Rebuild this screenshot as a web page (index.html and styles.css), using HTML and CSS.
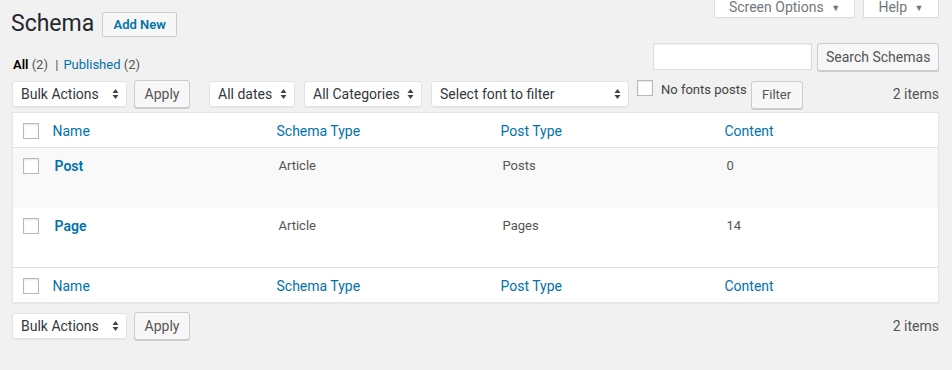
FILE: index.html
```html
<!DOCTYPE html>
<html lang="en">
<head>
    <meta charset="UTF-8">
    <meta name="viewport" content="width=device-width, initial-scale=1.0">
    <title>Schema</title>
    <link rel="stylesheet" href="styles.css">
</head>
<body>

<div class="wrap">
    <!-- Title + screen meta tabs -->
    <div class="page-head">
        <h1 class="page-title">Schema</h1>
        <a class="page-title-action" href="#">Add New</a>
        <div class="screen-meta-links">
            <button class="meta-tab meta-tab-options">Screen Options <span class="tri">&#9660;</span></button>
            <button class="meta-tab meta-tab-help">Help <span class="tri">&#9660;</span></button>
        </div>
    </div>

    <div class="views-row">
        <ul class="subsubsub">
            <li><a class="current" href="#">All <span class="count">(2)</span></a> <span class="sep">|</span></li>
            <li><a href="#">Published <span class="count">(2)</span></a></li>
        </ul>
        <div class="search-box">
            <input type="search" class="search-input">
            <button class="button">Search Schemas</button>
        </div>
    </div>

    <!-- Top filters -->
    <div class="tablenav">
        <div class="select w-bulk">Bulk Actions <svg class="arr" width="7" height="12" viewBox="0 0 7 12"><path d="M3.5 1 L6.5 5 L0.5 5 Z M3.5 11 L0.5 7 L6.5 7 Z" fill="#444"/></svg></div>
        <button class="button btn-apply">Apply</button>
        <div class="select w-dates gap-l">All dates <svg class="arr" width="7" height="12" viewBox="0 0 7 12"><path d="M3.5 1 L6.5 5 L0.5 5 Z M3.5 11 L0.5 7 L6.5 7 Z" fill="#444"/></svg></div>
        <div class="select w-cats">All Categories <svg class="arr" width="7" height="12" viewBox="0 0 7 12"><path d="M3.5 1 L6.5 5 L0.5 5 Z M3.5 11 L0.5 7 L6.5 7 Z" fill="#444"/></svg></div>
        <div class="select w-font">Select font to filter <svg class="arr" width="7" height="12" viewBox="0 0 7 12"><path d="M3.5 1 L6.5 5 L0.5 5 Z M3.5 11 L0.5 7 L6.5 7 Z" fill="#444"/></svg></div>
        <label class="nofonts"><span class="cb"></span>No fonts posts</label>
        <button class="button btn-filter">Filter</button>
        <span class="displaying-num">2 items</span>
    </div>

    <table class="list-table">
        <colgroup>
            <col class="c-cb">
            <col>
            <col>
            <col>
            <col>
        </colgroup>
        <thead>
            <tr>
                <td class="check-col"><span class="cb"></span></td>
                <th><a href="#">Name</a></th>
                <th><a href="#">Schema Type</a></th>
                <th><a href="#">Post Type</a></th>
                <th><a href="#">Content</a></th>
            </tr>
        </thead>
        <tbody>
            <tr class="alt">
                <th class="check-col"><span class="cb"></span></th>
                <td><a class="row-title" href="#">Post</a></td>
                <td>Article</td>
                <td>Posts</td>
                <td>0</td>
            </tr>
            <tr>
                <th class="check-col"><span class="cb"></span></th>
                <td><a class="row-title" href="#">Page</a></td>
                <td>Article</td>
                <td>Pages</td>
                <td>14</td>
            </tr>
        </tbody>
        <tfoot>
            <tr>
                <td class="check-col"><span class="cb"></span></td>
                <th><a href="#">Name</a></th>
                <th><a href="#">Schema Type</a></th>
                <th><a href="#">Post Type</a></th>
                <th><a href="#">Content</a></th>
            </tr>
        </tfoot>
    </table>

    <!-- Bottom actions -->
    <div class="tablenav bottom">
        <div class="select w-bulk">Bulk Actions <svg class="arr" width="7" height="12" viewBox="0 0 7 12"><path d="M3.5 1 L6.5 5 L0.5 5 Z M3.5 11 L0.5 7 L6.5 7 Z" fill="#444"/></svg></div>
        <button class="button btn-apply">Apply</button>
        <span class="displaying-num">2 items</span>
    </div>
</div>

</body>
</html>
```

FILE: styles.css
```css
body {
    margin: 0;
    background-color: #f1f1f1;
    color: #444;
    font-family: Roboto, "Noto Sans", sans-serif;
    font-size: 13px;
}

a {
    color: #0073aa;
    text-decoration: none;
}

.wrap {
    padding: 0 13px 0 12px;
}

/* Header */
.page-head {
    display: flex;
    align-items: flex-start;
    height: 37px;
}

.page-title {
    margin: 9px 8px 0 -1px;
    font-size: 23px;
    font-weight: 400;
    line-height: 29px;
    color: #23282d;
}

.page-title-action {
    margin-top: 12px;
    box-sizing: border-box;
    height: 25px;
    width: 75px;
    border: 1px solid #ccc;
    border-radius: 2px;
    background: #f7f7f7;
    font-size: 13px;
    font-weight: 600;
    line-height: 23px;
    text-align: center;
}

.screen-meta-links {
    margin-left: auto;
    display: flex;
    gap: 8px;
}

.meta-tab {
    box-sizing: border-box;
    margin-top: -10px;
    height: 28px;
    padding: 8px 0 0;
    border: 1px solid #ddd;
    border-top: none;
    background: #fff;
    color: #72777c;
    font-family: inherit;
    font-size: 14px;
    line-height: 16px;
    box-shadow: 0 1px 1px -1px rgba(0, 0, 0, 0.1);
}

.meta-tab-options {
    width: 141px;
}

.meta-tab-help {
    width: 76px;
}

.tri {
    font-size: 9px;
    margin-left: 4px;
    vertical-align: 1px;
}

/* Views + search */
.views-row {
    display: flex;
    justify-content: space-between;
    align-items: flex-start;
    height: 37px;
    margin-top: 6px;
}

.subsubsub {
    list-style: none;
    margin: 13px 0 0 1px;
    padding: 0;
    display: flex;
    line-height: 17px;
    color: #555;
}

.subsubsub li {
    white-space: pre;
}

.subsubsub .current {
    color: #000;
    font-weight: 600;
}

.count {
    color: #555;
    font-weight: 400;
}

.sep {
    margin: 0 5px 0 4px;
}

.search-box {
    display: flex;
    gap: 5px;
}

.search-input {
    box-sizing: border-box;
    width: 159px;
    height: 27px;
    margin: 0;
    border: 1px solid #ddd;
    border-radius: 0;
    background: #fff;
    box-shadow: inset 0 1px 2px rgba(0, 0, 0, 0.07);
}

/* Buttons + selects */
.button {
    box-sizing: border-box;
    height: 28px;
    padding: 0 8px 1px;
    border: 1px solid #ccc;
    border-radius: 3px;
    background: #f7f7f7;
    box-shadow: 0 1px 0 #ccc;
    color: #555;
    font-family: inherit;
    font-size: 13px;
    white-space: nowrap;
    cursor: pointer;
}

.search-box .button {
    width: 122px;
    font-size: 14px;
}

.tablenav {
    display: flex;
    align-items: flex-start;
    height: 32px;
}

.select {
    box-sizing: border-box;
    display: flex;
    align-items: center;
    justify-content: space-between;
    height: 26px;
    margin-top: 1px;
    padding: 0 7px 0 8px;
    border: 1px solid #e2e2e2;
    border-radius: 3px;
    background: #fff;
    box-shadow: 0 1px 1px rgba(0, 0, 0, 0.04);
    color: #32373c;
    font-size: 14px;
    white-space: nowrap;
}

.w-bulk { width: 115px; }
.w-dates { width: 86px; }
.w-cats { width: 118px; margin-left: 9px; }
.w-font { width: 198px; margin-left: 9px; }

.gap-l {
    margin-left: 19px;
}

.btn-apply {
    width: 56px;
    margin-left: 7px;
    font-size: 14px;
}

.nofonts {
    display: flex;
    align-items: flex-start;
    margin-left: 8px;
    color: #444;
    font-size: 13px;
    line-height: 20px;
}

.nofonts .cb {
    margin-right: 8px;
}

.btn-filter {
    width: 52px;
    margin: 1px 0 0 4px;
}

.displaying-num {
    margin-left: auto;
    margin-top: 6px;
    color: #555;
    font-size: 14px;
}

.cb {
    box-sizing: border-box;
    display: inline-block;
    width: 16px;
    height: 16px;
    border: 1px solid #b4b9be;
    background: #fff;
    box-shadow: inset 0 1px 2px rgba(0, 0, 0, 0.1);
    flex: none;
}

/* Table */
.list-table {
    width: 100%;
    table-layout: fixed;
    border-collapse: collapse;
    background: #fff;
    border: 1px solid #e5e5e5;
    box-shadow: 0 1px 1px rgba(0, 0, 0, 0.04);
}

.c-cb { width: 30px; }

.list-table th,
.list-table td {
    text-align: left;
    vertical-align: top;
    font-weight: 400;
    padding: 0 10px;
}

.list-table thead tr,
.list-table tfoot tr {
    height: 35px;
}

.list-table thead th,
.list-table tfoot th {
    font-size: 14px;
    line-height: 20px;
    padding-top: 8px;
}

.list-table thead tr {
    border-bottom: 1px solid #e1e1e1;
}

.list-table tfoot tr {
    border-top: 1px solid #e1e1e1;
}

.list-table .check-col {
    padding: 10px 0 0 10px;
}

.list-table tbody tr {
    height: 60px;
}

.list-table tbody td {
    padding-top: 9px;
    color: #555;
    line-height: 18px;
}

.list-table tbody td:nth-child(n+2) {
    padding-left: 12px;
}

.list-table tbody tr.alt {
    background: #f9f9f9;
}

.row-title {
    font-size: 14px;
    font-weight: 600;
}

.tablenav.bottom {
    margin-top: 9px;
}
```
